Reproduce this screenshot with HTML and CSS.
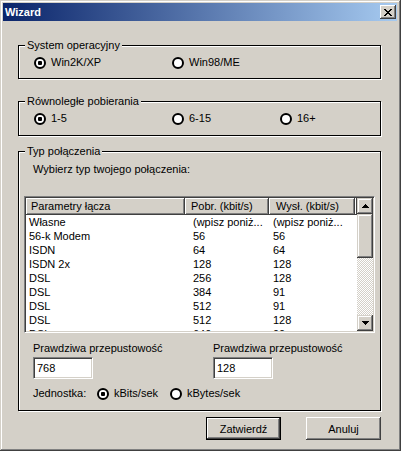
FILE: index.html
```html
<!DOCTYPE html>
<html>
<head>
<meta charset="utf-8">
<title>Wizard</title>
<link rel="stylesheet" href="styles.css">
</head>
<body>
<div class="window">
  <div class="titlebar">
    <span class="title">Wizard</span>
    <span class="close"><svg width="8" height="7" viewBox="0 0 8 7"><path d="M0 0h2v1h1v1h2V1h1V0h2v1H7v1H6v1H5v1h1v1h1v1h1v1H6V6H5V5H3v1H2v1H0V6h1V5h1V4h1V3H2V2H1V1H0z" fill="#000"/></svg></span>
  </div>
  <div class="content">
    <fieldset class="group g1">
      <legend>System operacyjny</legend>
      <div class="radios">
        <span class="radio w138"><span class="rb on"></span>Win2K/XP</span>
        <span class="radio"><span class="rb"></span>Win98/ME</span>
      </div>
    </fieldset>

    <fieldset class="group g2">
      <legend>Równoległe pobierania</legend>
      <div class="radios last">
        <span class="radio w138"><span class="rb on"></span>1-5</span>
        <span class="radio w108"><span class="rb"></span>6-15</span>
        <span class="radio"><span class="rb"></span>16+</span>
      </div>
    </fieldset>

    <fieldset class="group g3">
      <legend>Typ połączenia</legend>
      <div class="hint">Wybierz typ twojego połączenia:</div>
      <div class="list">
        <div class="lv">
          <div class="hdr">
            <span class="c1">Parametry łącza</span>
            <span class="c2">Pobr. (kbit/s)</span>
            <span class="c3">Wysł. (kbit/s)</span>
            <span class="c4"></span>
          </div>
          <div class="rows">
            <div class="row"><span>Własne</span><span>(wpisz poniż...</span><span>(wpisz poniż...</span></div>
            <div class="row"><span>56-k Modem</span><span>56</span><span>56</span></div>
            <div class="row"><span>ISDN</span><span>64</span><span>64</span></div>
            <div class="row"><span>ISDN 2x</span><span>128</span><span>128</span></div>
            <div class="row"><span>DSL</span><span>256</span><span>128</span></div>
            <div class="row"><span>DSL</span><span>384</span><span>91</span></div>
            <div class="row"><span>DSL</span><span>512</span><span>91</span></div>
            <div class="row"><span>DSL</span><span>512</span><span>128</span></div>
            <div class="row"><span>DSL</span><span>640</span><span>90</span></div>
          </div>
        </div>
        <div class="sb">
          <div class="sbtn"><svg width="7" height="4" viewBox="0 0 7 4"><path d="M3 0h1v1h1v1h1v1h1v1H0V3h1V2h1V1h1z" fill="#000"/></svg></div>
          <div class="thumb"></div>
          <div class="track"></div>
          <div class="sbtn"><svg width="7" height="4" viewBox="0 0 7 4"><path d="M0 0h7v1H6v1H5v1H4v1H3V3H2V2H1V1H0z" fill="#000"/></svg></div>
        </div>
      </div>
      <div class="bw">
        <div class="fld">
          <div class="flabel">Prawdziwa przepustowość</div>
          <div class="edit">768</div>
        </div>
        <div class="fld">
          <div class="flabel">Prawdziwa przepustowość</div>
          <div class="edit">128</div>
        </div>
      </div>
      <div class="unit">
        <span class="ulbl">Jednostka:</span>
        <span class="radio w73"><span class="rb on"></span>kBits/sek</span>
        <span class="radio"><span class="rb"></span>kBytes/sek</span>
      </div>
    </fieldset>

    <div class="btns">
      <div class="btn def">Zatwierdź</div>
      <div class="btn">Anuluj</div>
    </div>
  </div>
</div>
</body>
</html>
```

FILE: styles.css
```css
* { box-sizing: border-box; }
html, body { margin: 0; padding: 0; }
body {
  width: 401px;
  height: 451px;
  overflow: hidden;
  background: #d4d0c8;
  font-family: "Liberation Sans", Arial, sans-serif;
  font-size: 11px;
  color: #000;
}
.window {
  width: 401px;
  height: 451px;
  padding: 3px 4px 3px 3px;
  background: #d4d0c8;
  box-shadow: inset -1px -1px #404040, inset 1px 1px #d4d0c8, inset -2px -2px #808080, inset 2px 2px #fff;
  display: flex;
  flex-direction: column;
}
.titlebar {
  height: 18px;
  flex: none;
  display: flex;
  align-items: center;
  justify-content: space-between;
  padding: 0 1px 0 2px;
  background: linear-gradient(to right, #0a246a, #a6caf0);
}
.title {
  color: #fff;
  font-weight: bold;
  font-size: 11px;
  line-height: 13px;
}
.close {
  width: 16px;
  height: 14px;
  display: flex;
  align-items: center;
  justify-content: center;
  background: #d4d0c8;
  box-shadow: inset -1px -1px #404040, inset 1px 1px #fff, inset -2px -2px #808080;
}
.close svg { display: block; }
.content {
  flex: 1;
  display: flex;
  flex-direction: column;
}
.group {
  margin: 0 0 0 15px;
  width: 363px;
  padding: 0;
  min-width: 0;
  border: 1px solid #000;
  box-shadow: inset 1px 1px #fff, 1px 1px #fff;
}
.group legend {
  margin-left: 6px;
  padding: 0 2px;
  line-height: 13px;
  background: #d4d0c8;
}
.g1 { margin-top: 18px; }
.g2 { margin-top: 16px; }
.g3 { margin-top: 9px; }
.radios {
  display: flex;
  align-items: center;
  height: 13px;
  margin: 4px 0 9px 15px;
}
.radios.last { margin-bottom: 10px; }
.radio {
  flex: none;
  display: flex;
  align-items: center;
  gap: 5px;
  white-space: nowrap;
  line-height: 13px;
}
.w138 { width: 138px; }
.w108 { width: 108px; }
.w73 { width: 73px; }
.rb {
  flex: none;
  width: 12px;
  height: 12px;
  border-radius: 50%;
  border: 2px solid #000;
  background: #fff;
  display: flex;
  align-items: center;
  justify-content: center;
}
.rb.on::after {
  content: "";
  width: 4px;
  height: 4px;
  border-radius: 1px;
  background: #000;
}
.hint {
  margin: 5px 0 0 14px;
  line-height: 13px;
}
.list {
  margin: 20px 0 0 5px;
  width: 351px;
  height: 137px;
  display: flex;
  border: 1px solid;
  border-color: #808080 #fff #fff #808080;
  padding: 1px;
  background: #fff;
  box-shadow: inset 1px 1px #404040, inset -1px -1px #d4d0c8;
}
.lv {
  flex: 1;
  min-width: 0;
  display: flex;
  flex-direction: column;
  overflow: hidden;
}
.hdr {
  flex: none;
  height: 17px;
  display: grid;
  grid-template-columns: 159px 84px 86px 1fr;
  background: #d4d0c8;
}
.hdr span {
  line-height: 16px;
  white-space: nowrap;
  overflow: hidden;
  box-shadow: inset -1px -1px #404040, inset 1px 1px #fff, inset -2px -2px #808080;
}
.hdr .c1 { padding-left: 5px; }
.hdr .c2 { padding-left: 6px; }
.hdr .c3 { padding-left: 7px; }
.rows {
  flex: 1;
  overflow: hidden;
}
.row {
  display: grid;
  grid-template-columns: 159px 84px 86px;
  height: 14px;
  line-height: 14px;
  white-space: nowrap;
}
.row span { overflow: hidden; }
.row span:nth-child(1) { padding-left: 3px; }
.row span:nth-child(2) { padding-left: 8px; }
.row span:nth-child(3) { padding-left: 4px; }
.sb {
  flex: none;
  width: 16px;
  display: flex;
  flex-direction: column;
}
.sbtn, .thumb {
  flex: none;
  background: #d4d0c8;
  box-shadow: inset -1px -1px #404040, inset 1px 1px #d4d0c8, inset -2px -2px #808080, inset 2px 2px #fff;
}
.sbtn {
  height: 16px;
  display: flex;
  align-items: center;
  justify-content: center;
}
.sbtn svg { display: block; }
.thumb { height: 44px; }
.track {
  flex: 1;
  background: repeating-conic-gradient(#fff 0 25%, #d4d0c8 0 50%) 0 0 / 2px 2px;
}
.bw {
  display: flex;
  margin: 9px 0 0 14px;
}
.fld { flex: none; width: 180px; }
.flabel {
  line-height: 13px;
  white-space: nowrap;
}
.edit {
  margin-top: 2px;
  width: 60px;
  height: 22px;
  border: 1px solid;
  border-color: #808080 #fff #fff #808080;
  background: #fff;
  box-shadow: inset 1px 1px #404040, inset -1px -1px #d4d0c8;
  padding-left: 3px;
  line-height: 20px;
}
.unit {
  display: flex;
  align-items: center;
  height: 13px;
  margin: 8px 0 10px 14px;
}
.ulbl { flex: none; width: 64px; line-height: 13px; }
.btns {
  display: flex;
  justify-content: flex-end;
  gap: 25px;
  margin: 6px 16px 0 0;
}
.btn {
  flex: none;
  width: 75px;
  height: 23px;
  display: flex;
  align-items: center;
  justify-content: center;
  background: #d4d0c8;
  box-shadow: inset -1px -1px #404040, inset 1px 1px #fff, inset -2px -2px #808080;
}
.btn.def {
  border: 1px solid #000;
}
```
